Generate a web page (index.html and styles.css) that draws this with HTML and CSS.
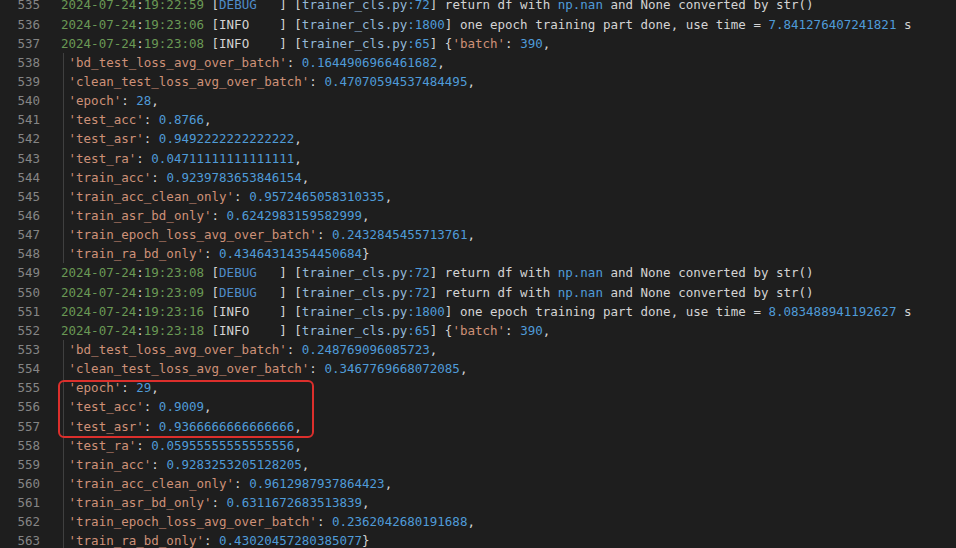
FILE: index.html
```html
<!DOCTYPE html>
<html>
<head>
<meta charset="utf-8">
<link rel="stylesheet" href="styles.css">
</head>
<body>
<div class="editor">
  <div class="line"><span class="ln">535</span><span class="code"><span class="dt">2024-07-24</span>:<span class="dt">19:22:59</span> [<span class="dbg">DEBUG</span>   ] [<span class="file">trainer_cls.py</span><span class="num">:72</span>] return df with <span class="num">np.nan</span> and None converted by str()</span></div>
  <div class="line"><span class="ln">536</span><span class="code"><span class="dt">2024-07-24</span>:<span class="dt">19:23:06</span> [INFO    ] [<span class="file">trainer_cls.py</span><span class="num">:1800</span>] one epoch training part done, use time = <span class="num">7.841276407241821</span> s</span></div>
  <div class="line"><span class="ln">537</span><span class="code"><span class="dt">2024-07-24</span>:<span class="dt">19:23:08</span> [INFO    ] [<span class="file">trainer_cls.py</span><span class="num">:65</span>] {<span class="str">'batch'</span>: <span class="num">390</span>,</span></div>
  <div class="line"><span class="ln">538</span><span class="code cont"> <span class="str">'bd_test_loss_avg_over_batch'</span>: <span class="num">0.1644906966461682</span>,</span></div>
  <div class="line"><span class="ln">539</span><span class="code cont"> <span class="str">'clean_test_loss_avg_over_batch'</span>: <span class="num">0.47070594537484495</span>,</span></div>
  <div class="line"><span class="ln">540</span><span class="code cont"> <span class="str">'epoch'</span>: <span class="num">28</span>,</span></div>
  <div class="line"><span class="ln">541</span><span class="code cont"> <span class="str">'test_acc'</span>: <span class="num">0.8766</span>,</span></div>
  <div class="line"><span class="ln">542</span><span class="code cont"> <span class="str">'test_asr'</span>: <span class="num">0.9492222222222222</span>,</span></div>
  <div class="line"><span class="ln">543</span><span class="code cont"> <span class="str">'test_ra'</span>: <span class="num">0.04711111111111111</span>,</span></div>
  <div class="line"><span class="ln">544</span><span class="code cont"> <span class="str">'train_acc'</span>: <span class="num">0.9239783653846154</span>,</span></div>
  <div class="line"><span class="ln">545</span><span class="code cont"> <span class="str">'train_acc_clean_only'</span>: <span class="num">0.9572465058310335</span>,</span></div>
  <div class="line"><span class="ln">546</span><span class="code cont"> <span class="str">'train_asr_bd_only'</span>: <span class="num">0.6242983159582999</span>,</span></div>
  <div class="line"><span class="ln">547</span><span class="code cont"> <span class="str">'train_epoch_loss_avg_over_batch'</span>: <span class="num">0.2432845455713761</span>,</span></div>
  <div class="line"><span class="ln">548</span><span class="code cont"> <span class="str">'train_ra_bd_only'</span>: <span class="num">0.43464314354450684</span>}</span></div>
  <div class="line"><span class="ln">549</span><span class="code"><span class="dt">2024-07-24</span>:<span class="dt">19:23:08</span> [<span class="dbg">DEBUG</span>   ] [<span class="file">trainer_cls.py</span><span class="num">:72</span>] return df with <span class="num">np.nan</span> and None converted by str()</span></div>
  <div class="line"><span class="ln">550</span><span class="code"><span class="dt">2024-07-24</span>:<span class="dt">19:23:09</span> [<span class="dbg">DEBUG</span>   ] [<span class="file">trainer_cls.py</span><span class="num">:72</span>] return df with <span class="num">np.nan</span> and None converted by str()</span></div>
  <div class="line"><span class="ln">551</span><span class="code"><span class="dt">2024-07-24</span>:<span class="dt">19:23:16</span> [INFO    ] [<span class="file">trainer_cls.py</span><span class="num">:1800</span>] one epoch training part done, use time = <span class="num">8.083488941192627</span> s</span></div>
  <div class="line"><span class="ln">552</span><span class="code"><span class="dt">2024-07-24</span>:<span class="dt">19:23:18</span> [INFO    ] [<span class="file">trainer_cls.py</span><span class="num">:65</span>] {<span class="str">'batch'</span>: <span class="num">390</span>,</span></div>
  <div class="line"><span class="ln">553</span><span class="code cont"> <span class="str">'bd_test_loss_avg_over_batch'</span>: <span class="num">0.248769096085723</span>,</span></div>
  <div class="line"><span class="ln">554</span><span class="code cont"> <span class="str">'clean_test_loss_avg_over_batch'</span>: <span class="num">0.3467769668072085</span>,</span></div>
  <div class="line"><span class="ln">555</span><span class="code cont"> <span class="str">'epoch'</span>: <span class="num">29</span>,</span></div>
  <div class="line"><span class="ln">556</span><span class="code cont"> <span class="str">'test_acc'</span>: <span class="num">0.9009</span>,</span></div>
  <div class="line"><span class="ln">557</span><span class="code cont"> <span class="str">'test_asr'</span>: <span class="num">0.9366666666666666</span>,</span></div>
  <div class="line"><span class="ln">558</span><span class="code cont"> <span class="str">'test_ra'</span>: <span class="num">0.05955555555555556</span>,</span></div>
  <div class="line"><span class="ln">559</span><span class="code cont"> <span class="str">'train_acc'</span>: <span class="num">0.9283253205128205</span>,</span></div>
  <div class="line"><span class="ln">560</span><span class="code cont"> <span class="str">'train_acc_clean_only'</span>: <span class="num">0.9612987937864423</span>,</span></div>
  <div class="line"><span class="ln">561</span><span class="code cont"> <span class="str">'train_asr_bd_only'</span>: <span class="num">0.6311672683513839</span>,</span></div>
  <div class="line"><span class="ln">562</span><span class="code cont"> <span class="str">'train_epoch_loss_avg_over_batch'</span>: <span class="num">0.2362042680191688</span>,</span></div>
  <div class="line"><span class="ln">563</span><span class="code cont"> <span class="str">'train_ra_bd_only'</span>: <span class="num">0.43020457280385077</span>}</span></div>
  <div class="highlight"></div>
</div>
</body>
</html>
```
FILE: styles.css
```css
html, body {
  margin: 0;
  padding: 0;
  background: #1e1e1e;
  overflow: hidden;
}
.editor {
  position: relative;
  margin-top: -4.6px;
  font-family: "DejaVu Sans Mono", "Liberation Mono", monospace;
  font-size: 12.5px;
  color: #d4d4d4;
}
.line {
  display: flex;
  height: 19.15px;
  line-height: 19.15px;
  white-space: pre;
}
.ln {
  width: 40px;
  flex: none;
  text-align: right;
  color: #858585;
}
.code {
  margin-left: 21px;
  flex: 1;
}
.cont {
  background: linear-gradient(#404040, #404040) no-repeat 2px 0 / 1px 100%;
}
.dt { color: #6a9955; }
.dbg { color: #4f8cc9; }
.file { color: #93b8d8; }
.num { color: #4f9bd8; }
.str { color: #ce9178; }
.highlight {
  position: absolute;
  left: 58px;
  top: 384.6px;
  width: 256px;
  height: 58px;
  box-sizing: border-box;
  border: 2px solid #dc2f2c;
  border-radius: 6px;
}
```
